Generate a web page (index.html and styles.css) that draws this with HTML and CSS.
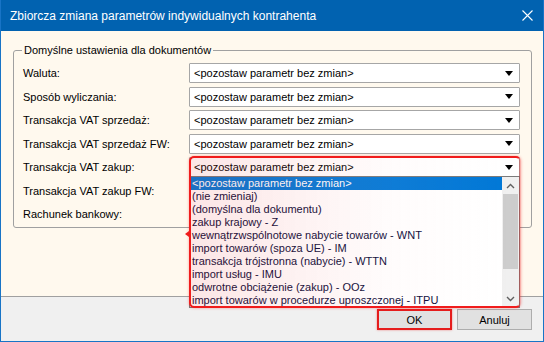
FILE: index.html
```html
<!DOCTYPE html>
<html lang="pl">
<head>
<meta charset="utf-8">
<title>Zbiorcza zmiana parametrów</title>
<link rel="stylesheet" href="styles.css">
</head>
<body>
<div class="window">
  <div class="titlebar">
    <span class="title">Zbiorcza zmiana parametrów indywidualnych kontrahenta</span>
    <svg class="close" width="11" height="11" viewBox="0 0 11 11"><path d="M0.5 0.5 L10.5 10.5 M10.5 0.5 L0.5 10.5" stroke="#fff" stroke-width="1.1" fill="none"/></svg>
  </div>
  <div class="content">
    <div class="group">
      <div class="legend">Domyślne ustawienia dla dokumentów</div>
      <div class="rows">
        <div class="label">Waluta:</div>
        <div class="combo"><span>&lt;pozostaw parametr bez zmian&gt;</span><i class="arrow"></i></div>
        <div class="label">Sposób wyliczania:</div>
        <div class="combo"><span>&lt;pozostaw parametr bez zmian&gt;</span><i class="arrow"></i></div>
        <div class="label">Transakcja VAT sprzedaż:</div>
        <div class="combo"><span>&lt;pozostaw parametr bez zmian&gt;</span><i class="arrow"></i></div>
        <div class="label">Transakcja VAT sprzedaż FW:</div>
        <div class="combo"><span>&lt;pozostaw parametr bez zmian&gt;</span><i class="arrow"></i></div>
        <div class="label">Transakcja VAT zakup:</div>
        <div class="combo open"><span>&lt;pozostaw parametr bez zmian&gt;</span><i class="arrow"></i>
          <div class="dropdown">
            <ul class="items">
              <li class="sel">&lt;pozostaw parametr bez zmian&gt;</li>
              <li>(nie zmieniaj)</li>
              <li>(domyślna dla dokumentu)</li>
              <li>zakup krajowy - Z</li>
              <li>wewnątrzwspólnotowe nabycie towarów - WNT</li>
              <li>import towarów (spoza UE) - IM</li>
              <li>transakcja trójstronna (nabycie) - WTTN</li>
              <li>import usług - IMU</li>
              <li>odwrotne obciążenie (zakup) - OOz</li>
              <li>import towarów w procedurze uproszczonej - ITPU</li>
            </ul>
            <div class="scrollbar">
              <div class="sb-btn"><svg width="9" height="6" viewBox="0 0 9 6"><path d="M1 5 L4.5 1.5 L8 5" stroke="#606060" stroke-width="1.4" fill="none"/></svg></div>
              <div class="sb-track"><div class="sb-thumb"></div></div>
              <div class="sb-btn"><svg width="9" height="6" viewBox="0 0 9 6"><path d="M1 1 L4.5 4.5 L8 1" stroke="#606060" stroke-width="1.4" fill="none"/></svg></div>
            </div>
          </div>
          <div class="annot"><i class="pointer"></i></div>
        </div>
        <div class="label">Transakcja VAT zakup FW:</div>
        <div class="cell"></div>
        <div class="label">Rachunek bankowy:</div>
        <div class="cell"></div>
      </div>
    </div>
  </div>
  <div class="footer">
    <button class="btn ok">OK</button>
    <button class="btn">Anuluj</button>
  </div>
</div>
</body>
</html>
```

FILE: styles.css
```css
html, body {
  margin: 0;
  padding: 0;
}
body {
  width: 544px;
  height: 342px;
  overflow: hidden;
  font-family: "Liberation Sans", Arial, sans-serif;
  font-size: 11px;
  color: #000;
}
.window {
  width: 544px;
  height: 342px;
  box-sizing: border-box;
  border: 1px solid #1874c6;
  border-top: 0;
  display: flex;
  flex-direction: column;
}
.titlebar {
  height: 31px;
  flex: none;
  background: #0162b0;
  color: #fff;
  display: flex;
  align-items: center;
  justify-content: space-between;
  padding: 0 10px 0 9px;
  font-size: 12px;
}
.close {
  display: block;
}
.content {
  flex: none;
  height: 266px;
  box-sizing: border-box;
  background: #fff9ee;
  border-bottom: 1px solid #a0a0a0;
  padding-top: 19px;
}
.group {
  margin: 0 11px 0 12px;
  height: 178px;
  box-sizing: border-box;
  border: 1px solid #a0a0a0;
  border-radius: 3px;
  padding: 0 11px 0 9px;
}
.legend {
  display: block;
  width: fit-content;
  margin: -7px 0 0 -1px;
  padding: 0 2px;
  background: #fff9ee;
  line-height: 13px;
  height: 13px;
  font-size: 11px;
}
.rows {
  margin-top: 6px;
  display: grid;
  grid-template-columns: 166px 1fr;
  grid-auto-rows: 20px;
  row-gap: 3.5px;
}
.label {
  display: flex;
  align-items: center;
  font-size: 11px;
}
.combo {
  position: relative;
  box-sizing: border-box;
  border: 1px solid #a6a6a6;
  border-radius: 1px;
  background: #fff;
  display: flex;
  align-items: center;
  justify-content: space-between;
  padding: 0 6px 0 4px;
  font-size: 11px;
}
.arrow {
  width: 0;
  height: 0;
  border-left: 4.5px solid transparent;
  border-right: 4.5px solid transparent;
  border-top: 5px solid #000;
}
.dropdown {
  position: absolute;
  left: -1px;
  right: -1px;
  top: 100%;
  height: 132px;
  box-sizing: border-box;
  border: 1px solid #7a7a7a;
  background: #fff;
  display: flex;
  z-index: 2;
}
.items {
  list-style: none;
  margin: 0;
  padding: 0;
  flex: 1;
  overflow: hidden;
}
.items li {
  height: 13px;
  line-height: 13px;
  padding-left: 2px;
  white-space: nowrap;
  color: #0a0a38;
  font-size: 11px;
}
.items li.sel {
  background: #0078d7;
  color: #fff;
}
.scrollbar {
  width: 17px;
  flex: none;
  background: #f0f0f0;
  display: flex;
  flex-direction: column;
}
.sb-btn {
  height: 17px;
  flex: none;
  display: flex;
  align-items: center;
  justify-content: center;
}
.sb-track {
  flex: 1;
  padding: 0 1px;
}
.sb-thumb {
  height: 75px;
  background: #cdcdcd;
}
.annot {
  position: absolute;
  left: -1px;
  right: -2px;
  top: -2px;
  height: 152px;
  box-sizing: border-box;
  border: 2px solid #f01c1c;
  border-right-color: rgba(240, 28, 28, 0.25);
  border-radius: 5px;
  background: linear-gradient(to right, rgba(230, 60, 60, 0.13), rgba(255, 200, 200, 0.06) 60%, rgba(255, 255, 255, 0) 100%);
  box-shadow: 0 0 3px rgba(240, 0, 0, 0.35);
  pointer-events: none;
  z-index: 3;
}
.pointer {
  position: absolute;
  left: -6px;
  top: 73px;
  width: 0;
  height: 0;
  border-top: 3px solid transparent;
  border-bottom: 3px solid transparent;
  border-right: 4px solid #f01c1c;
}
.footer {
  flex: 1;
  background: #f0f0f0;
  display: flex;
  justify-content: flex-end;
  align-items: flex-start;
  gap: 5px;
  padding: 12px 11px 0 0;
}
.btn {
  width: 75px;
  height: 21px;
  box-sizing: border-box;
  margin: 0;
  border: 1px solid #adadad;
  background: #e1e1e1;
  font-family: "Liberation Sans", Arial, sans-serif;
  font-size: 11px;
  color: #000;
  padding: 0;
}
.btn.ok {
  border: 2px solid #e51c1c;
  box-shadow: 0 0 2px rgba(229, 28, 28, 0.5);
}
```
